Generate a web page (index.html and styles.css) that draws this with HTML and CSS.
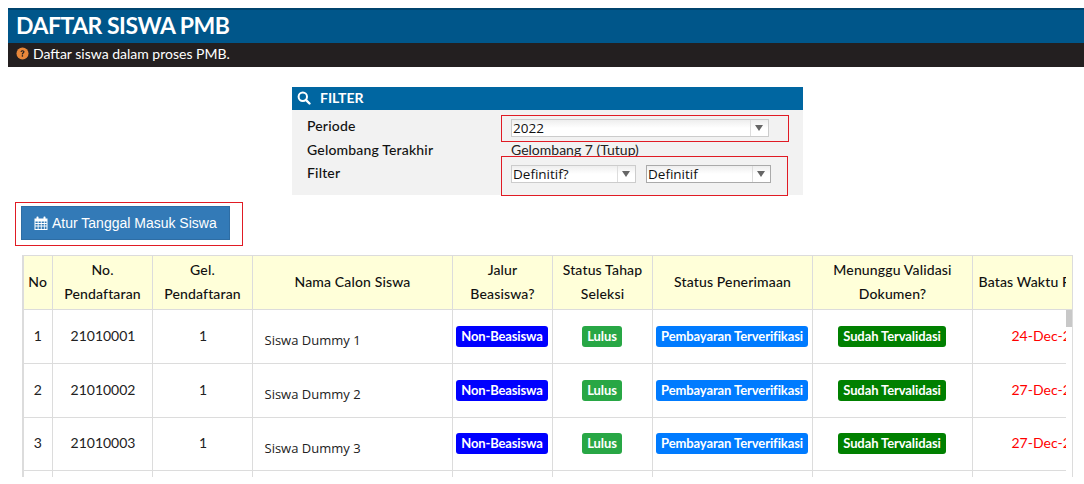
FILE: index.html
```html
<!DOCTYPE html>
<html lang="id">
<head>
<meta charset="utf-8">
<title>Daftar Siswa PMB</title>
<link rel="stylesheet" href="styles.css">
</head>
<body>
<header class="page-head">
  <h1 class="page-title">DAFTAR SISWA PMB</h1>
  <p class="page-sub">
    <svg class="help-icon" viewBox="0 0 14 14" width="13" height="13"><circle cx="7" cy="7" r="6.5" fill="#e8873a"/><path d="M4.9 5.4C5 4.1 5.9 3.4 7.1 3.4c1.2 0 2.1.8 2.1 1.8 0 1.6-1.7 1.5-1.7 2.9H6.2c0-2 1.6-1.9 1.6-2.9 0-.4-.3-.7-.8-.7-.5 0-.8.3-.9.9z" fill="#231f20"/><rect x="6.2" y="8.8" width="1.4" height="1.6" fill="#231f20"/></svg>
    Daftar siswa dalam proses PMB.
  </p>
</header>

<section class="filter">
  <h2 class="filter-head">
    <svg class="search-icon" viewBox="0 0 14 14" width="14" height="14"><circle cx="5.8" cy="5.8" r="4.2" fill="none" stroke="#fff" stroke-width="2"/><path d="M8.9 8.9l3.6 3.6" stroke="#fff" stroke-width="2.4" stroke-linecap="round"/></svg>
    FILTER
  </h2>
  <div class="filter-body">
    <div class="filter-label">Periode</div>
    <div class="filter-field field-top">
      <div class="select select-wide"><span class="select-text">2022</span><span class="select-arrow"></span></div>
    </div>
    <div class="filter-label">Gelombang Terakhir</div>
    <div class="filter-field field-value">Gelombang 7 (Tutup)</div>
    <div class="filter-label">Filter</div>
    <div class="filter-field field-pair">
      <div class="select select-half"><span class="select-text">Definitif?</span><span class="select-arrow"></span></div>
      <div class="select select-half select-dark"><span class="select-text">Definitif</span><span class="select-arrow"></span></div>
    </div>
  </div>
  <span class="mark mark-top"></span>
  <span class="mark mark-bottom"></span>
</section>

<div class="action-mark">
  <button class="btn" type="button">
    <svg class="cal-icon" viewBox="0 0 14 14" width="14" height="14"><path fill="#fff" fill-rule="evenodd" d="M0.5 2.5h2V1.2a.7.7 0 0 1 .7-.7h.6a.7.7 0 0 1 .7.7V2.5h5V1.2a.7.7 0 0 1 .7-.7h.6a.7.7 0 0 1 .7.7V2.5h2V14H.5zM1.5 5.5v1.6h2.2V5.5zM4.6 5.5v1.6h2.2V5.5zM7.7 5.5v1.6h2.2V5.5zM10.7 5.5v1.6h1.8V5.5zM1.5 8v1.6h2.2V8zM4.6 8v1.6h2.2V8zM7.7 8v1.6h2.2V8zM10.7 8v1.6h1.8V8zM1.5 10.5V13h2.2v-2.5zM4.6 10.5V13h2.2v-2.5zM7.7 10.5V13h2.2v-2.5zM10.7 10.5V13h1.8v-2.5z"/></svg>
    Atur Tanggal Masuk Siswa
  </button>
</div>

<div class="table-frame">
  <div class="table-clip">
    <table class="data">
      <colgroup>
        <col class="c-no"><col class="c-reg"><col class="c-gel"><col class="c-name"><col class="c-jalur"><col class="c-tahap"><col class="c-terima"><col class="c-valid"><col class="c-batas">
      </colgroup>
      <thead>
        <tr>
          <th>No</th><th>No.<br>Pendaftaran</th><th>Gel.<br>Pendaftaran</th><th>Nama Calon Siswa</th><th>Jalur<br>Beasiswa?</th><th>Status Tahap<br>Seleksi</th><th>Status Penerimaan</th><th>Menunggu Validasi<br>Dokumen?</th><th>Batas Waktu Pembayaran</th>
        </tr>
      </thead>
      <tbody>
        <tr class="row-a">
          <td>1</td><td>21010001</td><td>1</td><td class="name">Siswa Dummy 1</td>
          <td class="tag"><span class="badge b-blue">Non-Beasiswa</span></td><td class="tag"><span class="badge b-green">Lulus</span></td><td class="tag"><span class="badge b-sky">Pembayaran Terverifikasi</span></td><td class="tag"><span class="badge b-dark">Sudah Tervalidasi</span></td><td class="date">24-Dec-2021</td>
        </tr>
        <tr class="row-a">
          <td>2</td><td>21010002</td><td>1</td><td class="name">Siswa Dummy 2</td>
          <td class="tag"><span class="badge b-blue">Non-Beasiswa</span></td><td class="tag"><span class="badge b-green">Lulus</span></td><td class="tag"><span class="badge b-sky">Pembayaran Terverifikasi</span></td><td class="tag"><span class="badge b-dark">Sudah Tervalidasi</span></td><td class="date">27-Dec-2021</td>
        </tr>
        <tr class="row-b">
          <td>3</td><td>21010003</td><td>1</td><td class="name">Siswa Dummy 3</td>
          <td class="tag"><span class="badge b-blue">Non-Beasiswa</span></td><td class="tag"><span class="badge b-green">Lulus</span></td><td class="tag"><span class="badge b-sky">Pembayaran Terverifikasi</span></td><td class="tag"><span class="badge b-dark">Sudah Tervalidasi</span></td><td class="date">27-Dec-2021</td>
        </tr>
        <tr class="row-a">
          <td>&nbsp;</td><td></td><td></td><td></td><td></td><td></td><td></td><td></td><td></td>
        </tr>
      </tbody>
    </table>
  </div>
  <div class="scroll-track"><div class="scroll-corner"></div><div class="scroll-thumb"></div></div>
</div>
</body>
</html>
```
FILE: styles.css
```css
* { box-sizing: border-box; }
html, body { height: 484px; overflow: hidden; }
body {
  margin: 0;
  padding-top: 8px;
  background: #fff;
  color: #111;
  font-family: Lato, "Liberation Sans", sans-serif;
  font-size: 14px;
}

/* Page heading */
.page-head { margin-left: 8px; }
.page-title {
  margin: 0;
  height: 35px;
  padding-left: 8px;
  border-top: 2px solid #00446e;
  background: #00568a;
  color: #fff;
  font-size: 23px;
  font-weight: 700;
  letter-spacing: -0.5px;
  line-height: 30px;
}
.page-sub {
  display: flex;
  align-items: center;
  gap: 4px;
  margin: 0;
  height: 24px;
  padding: 0 0 3px 8px;
  background: #231f20;
  color: #fff;
  font-size: 14px;
}

/* Filter panel */
.filter {
  position: relative;
  width: 511px;
  height: 108px;
  margin: 20px 0 0 292px;
  background: #f2f2f2;
}
.filter-head {
  display: flex;
  align-items: center;
  gap: 9px;
  margin: 0;
  height: 23px;
  padding: 0 0 2px 5px;
  background: #0066a1;
  color: #fff;
  font-size: 14px;
  font-weight: 700;
}
.filter-body {
  display: grid;
  grid-template-columns: 204px 1fr;
  grid-template-rows: 24px 23px 24px;
  padding: 5px 0 0 15px;
}
.filter-label {
  font-weight: 500;
  letter-spacing: 0.17px;
  line-height: 22px;
  color: #111;
}
.filter-field { min-width: 0; }
.field-top { padding-top: 4px; }
.field-value { line-height: 22px; color: #222; }
.field-pair { display: flex; gap: 10px; padding-top: 3px; }

.select {
  display: flex;
  height: 18px;
  background: linear-gradient(#eee, #fff 50%);
  border: 1px solid #ccc;
  color: #111;
  line-height: 17px;
  font-family: "Open Sans", Lato, sans-serif;
  font-size: 13.5px;
}
.select-wide { width: 258px; }
.select-half { width: 125px; }
.select-dark { border-color: #aaa; }
.select-text { flex: 1; padding-left: 1px; }
.select-arrow {
  position: relative;
  width: 18px;
  border-left: 1px solid #ddd;
}
.select-arrow::after {
  content: "";
  position: absolute;
  left: 4px;
  top: 5px;
  border: 4.5px solid transparent;
  border-top: 6px solid #666;
  border-bottom: 0;
}

/* Red annotation boxes */
.mark { position: absolute; border: 1px solid #e01b24; }
.mark-top { left: 209px; top: 28px; width: 288px; height: 27px; }
.mark-bottom { left: 209px; top: 69px; width: 287px; height: 40px; }

/* Action */
.action-mark {
  width: 228px;
  height: 44px;
  margin: 7px 0 0 15px;
  padding: 3px 0 0 5px;
  border: 1px solid #e01b24;
}
.btn {
  display: flex;
  align-items: center;
  gap: 4px;
  width: 209px;
  height: 34px;
  padding: 0 0 0 12px;
  background: #337ab7;
  border: 1px solid #2e6da4;
  color: #fff;
  font-family: "Liberation Sans", Arial, sans-serif;
  font-size: 14px;
  white-space: nowrap;
}

/* Table */
.table-frame {
  display: flex;
  width: 1051px;
  height: 222px;
  margin: 9px 0 0 22px;
  border-left: 2px solid #dcdcdc;
  border-right: 1px solid #dcdcdc;
  border-top: 1px solid #dcdcdc;
}
.table-clip { flex: 1; overflow: hidden; min-width: 0; }
.data {
  border-collapse: collapse;
  table-layout: fixed;
  width: 1108px;
}
.c-no { width: 28px; }
.c-reg, .c-gel, .c-jalur, .c-tahap { width: 100px; }
.c-name { width: 200px; }
.c-terima, .c-valid { width: 160px; }
.c-batas { width: 160px; }
.data th, .data td {
  border: 1px solid #dcdcdc;
  border-top: 0;
  text-align: center;
  vertical-align: middle;
  padding: 0 0 0 2px;
  overflow: hidden;
  white-space: nowrap;
}
.data tr > :first-child { border-left: 0; padding-left: 0; }
.data th {
  height: 53px;
  padding-left: 1px;
  background: #ffffd9;
  color: #111;
  font-size: 14px;
  font-weight: 500;
  letter-spacing: 0.15px;
  line-height: 24px;
}
.data tr > th:last-child { text-align: left; padding-left: 6px; }
.row-a td { height: 54px; color: #222; }
.row-b td { height: 53px; color: #222; }
.data td { padding-bottom: 2px; }
.data td.tag { padding: 0; }
.data td.name {
  text-align: left;
  padding: 8px 0 0 12px;
  font-family: "Open Sans", Lato, sans-serif;
  font-size: 13px;
}
.data td.date { color: #f00; text-align: left; padding-left: 39px; }
.badge {
  display: inline-block;
  height: 21px;
  padding: 0 5px;
  border-radius: 3px;
  color: #fff;
  font-size: 13px;
  font-weight: 700;
  letter-spacing: -0.1px;
  line-height: 20px;
  vertical-align: middle;
}
.b-blue { background: #00f; letter-spacing: -0.15px; }
.b-green { background: #28a745; }
.b-sky { background: #007bff; }
.b-dark { background: #008000; }

.scroll-track { width: 6px; flex: none; background: #fff; }
.scroll-corner { height: 54px; background: #ffffd9; border-bottom: 1px solid #dcdcdc; }
.scroll-thumb { height: 17px; background: #c8c8c8; }
```
